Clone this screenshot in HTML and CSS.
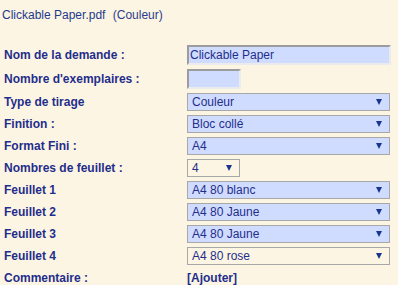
FILE: index.html
```html
<!DOCTYPE html>
<html>

<head>
  <title>Commande</title>
  <meta charset="utf-8">
  <link rel="stylesheet" href="styles.css">
</head>

<body>
  <div class="page">
    <div class="title">
      <span class="file">Clickable Paper.pdf</span>
      <span class="mode">(Couleur)</span>
    </div>

    <form class="order">
      <label class="label">Nom de la demande :</label>
      <div class="field"><input class="text wide" type="text" value="Clickable Paper"></div>

      <label class="label">Nombre d'exemplaires :</label>
      <div class="field"><input class="text small" type="text" value=""></div>

      <label class="label">Type de tirage</label>
      <div class="field"><div class="select"><select><option>Couleur</option></select></div></div>

      <label class="label">Finition :</label>
      <div class="field"><div class="select"><select><option>Bloc collé</option></select></div></div>

      <label class="label">Format Fini :</label>
      <div class="field"><div class="select"><select><option>A4</option></select></div></div>

      <label class="label">Nombres de feuillet :</label>
      <div class="field"><div class="select short plain"><select><option>4</option></select></div></div>

      <label class="label">Feuillet 1</label>
      <div class="field"><div class="select"><select><option>A4 80 blanc</option></select></div></div>

      <label class="label">Feuillet 2</label>
      <div class="field"><div class="select"><select><option>A4 80 Jaune</option></select></div></div>

      <label class="label">Feuillet 3</label>
      <div class="field"><div class="select"><select><option>A4 80 Jaune</option></select></div></div>

      <label class="label">Feuillet 4</label>
      <div class="field"><div class="select plain"><select><option>A4 80 rose</option></select></div></div>

      <label class="label">Commentaire :</label>
      <div class="field"><a class="add" href="#">[Ajouter]</a></div>
    </form>
  </div>
</body>
</html>
```

FILE: styles.css
```css
/* variables */
:root {
  --bg-color: #fdf5e3;
  --font-color: #1f2e8c;
  --field-color: #d0dcff;
  --border-color: #a8a8a8;
}

/* global */
* {
  box-sizing: border-box;
  font-family: "Liberation Sans", Arial, sans-serif;
}

body,
html {
  margin: 0;
  padding: 0;
  background: var(--bg-color);
  color: var(--font-color);
  font-size: 12px;
}

/* header */
.title {
  padding: 8px 4px 0 2px;
  line-height: 14px;
  height: 43px;
  color: #1d3a8c;
}

.mode {
  margin-left: 4px;
  color: #2a3c8e;
}

/* form */
.order {
  display: grid;
  grid-template-columns: 183px 1fr;
  grid-template-rows: 24px 24px repeat(9, 22px);
  padding-left: 4px;
}

.label {
  font-weight: bold;
  display: flex;
  align-items: center;
}

.field {
  display: flex;
  align-items: center;
}

.text {
  height: 20px;
  border-style: solid;
  border-width: 2px;
  border-color: #9c9c9c #ebebeb #ebebeb #9c9c9c;
  background: var(--field-color);
  color: var(--font-color);
  font-size: 12px;
  padding: 0 1px;
  margin: 0;
  outline: none;
}

.wide {
  width: 204px;
}

.small {
  width: 54px;
}

.select {
  position: relative;
  width: 203px;
  height: 18px;
}

.select select {
  appearance: none;
  -webkit-appearance: none;
  width: 100%;
  height: 100%;
  margin: 0;
  border: 1px solid var(--border-color);
  border-radius: 0;
  background: var(--field-color);
  color: var(--font-color);
  font-size: 12px;
  padding: 0 0 0 4px;
}

.select::after {
  content: "";
  position: absolute;
  right: 8px;
  top: 6px;
  border-left: 3px solid transparent;
  border-right: 3px solid transparent;
  border-top: 6px solid #1a3590;
  pointer-events: none;
}

.plain select {
  background: var(--bg-color);
}

.short {
  width: 53px;
}

.add {
  font-weight: bold;
  color: var(--font-color);
  text-decoration: none;
}
```
